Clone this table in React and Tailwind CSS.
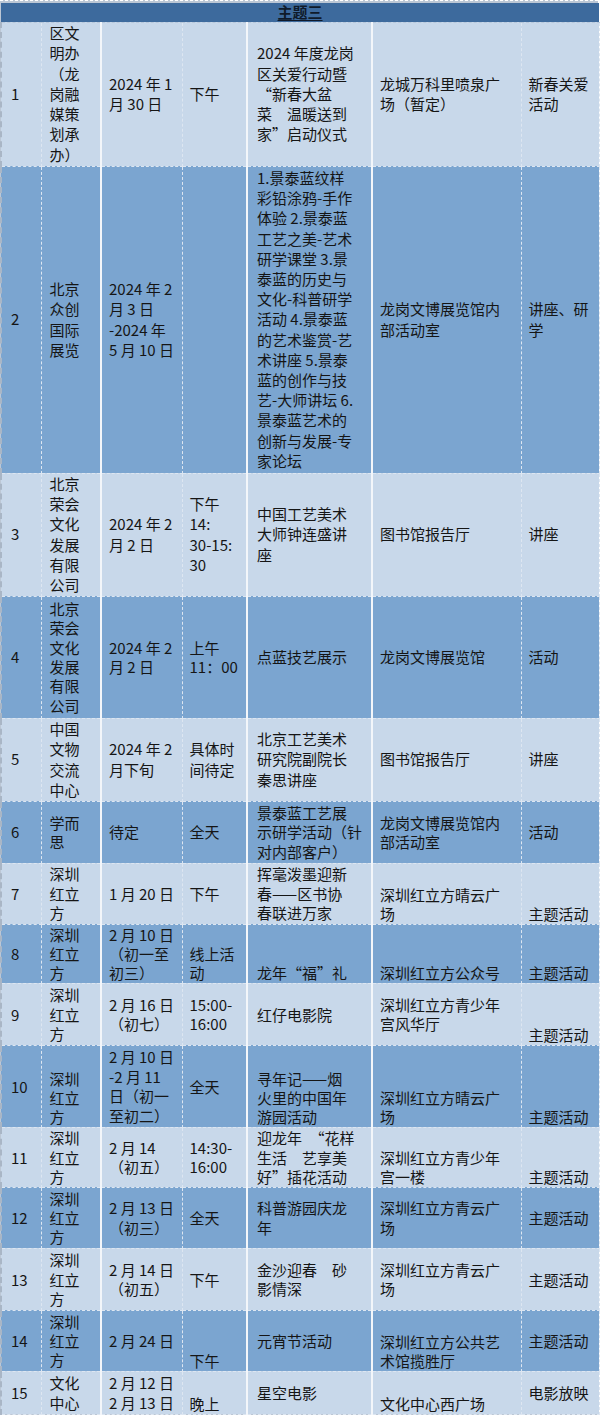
import React from "react";

// column setup: width, left padding, whether the left rule is a solid white line
const COLS = [
  { w: "w-[40px]", pad: "pl-[9px]", solid: false },
  { w: "w-[60px]", pad: "pl-[8px]", solid: false },
  { w: "w-[81px]", pad: "pl-[7px]", solid: true },
  { w: "w-[65px]", pad: "pl-[7px]", solid: false },
  { w: "w-[125px]", pad: "pl-[9px]", solid: true },
  { w: "w-[149px]", pad: "pl-[7px]", solid: true },
  { w: "w-[78px]", pad: "pl-[7px]", solid: false },
];

const SZ = "深圳\n红立\n方";

// v: vertical alignment per column (m = middle, b = bottom)
const ROWS = [
  {
    h: "h-[144px]",
    v: "mmmmmmm",
    cells: [
      "1",
      "区文\n明办\n（龙\n岗融\n媒策\n划承\n办）",
      "2024 年 1\n月 30 日",
      "下午",
      "2024 年度龙岗\n区关爱行动暨\n“新春大盆\n菜　温暖送到\n家”启动仪式",
      "龙城万科里喷泉广\n场（暂定）",
      "新春关爱\n活动",
    ],
  },
  {
    h: "h-[307px]",
    v: "mmmmmmm",
    cells: [
      "2",
      "北京\n众创\n国际\n展览",
      "2024 年 2\n月 3 日\n-2024 年\n5 月 10 日",
      "",
      "1.景泰蓝纹样\n彩铅涂鸦-手作\n体验 2.景泰蓝\n工艺之美-艺术\n研学课堂 3.景\n泰蓝的历史与\n文化-科普研学\n活动 4.景泰蓝\n的艺术鉴赏-艺\n术讲座 5.景泰\n蓝的创作与技\n艺-大师讲坛 6.\n景泰蓝艺术的\n创新与发展-专\n家论坛",
      "龙岗文博展览馆内\n部活动室",
      "讲座、研\n学",
    ],
  },
  {
    h: "h-[123px]",
    v: "mmmmmmm",
    cells: [
      "3",
      "北京\n荣会\n文化\n发展\n有限\n公司",
      "2024 年 2\n月 2 日",
      "下午\n14:\n30-15:\n30",
      "中国工艺美术\n大师钟连盛讲\n座",
      "图书馆报告厅",
      "讲座",
    ],
  },
  {
    h: "h-[122px]",
    v: "mmmmmmm",
    tight: true,
    cells: [
      "4",
      "北京\n荣会\n文化\n发展\n有限\n公司",
      "2024 年 2\n月 2 日",
      "上午\n11：00",
      "点蓝技艺展示",
      "龙岗文博展览馆",
      "活动",
    ],
  },
  {
    h: "h-[83px]",
    v: "mmmmmmm",
    cells: [
      "5",
      "中国\n文物\n交流\n中心",
      "2024 年 2\n月下旬",
      "具体时\n间待定",
      "北京工艺美术\n研究院副院长\n秦思讲座",
      "图书馆报告厅",
      "讲座",
    ],
  },
  {
    h: "h-[62px]",
    v: "mmmmmmm",
    tight: true,
    cells: [
      "6",
      "学而\n思",
      "待定",
      "全天",
      "景泰蓝工艺展\n示研学活动（针\n对内部客户）",
      "龙岗文博展览馆内\n部活动室",
      "活动",
    ],
  },
  {
    h: "h-[61px]",
    v: "mmmmmbb",
    tight: true,
    cells: [
      "7",
      SZ,
      "1 月 20 日",
      "下午",
      "挥毫泼墨迎新\n春——区书协\n春联进万家",
      "深圳红立方晴云广\n场",
      "主题活动",
    ],
  },
  {
    h: "h-[59px]",
    v: "mmmbbbb",
    tight: true,
    cells: [
      "8",
      SZ,
      "2 月 10 日\n（初一至\n初三）",
      "线上活\n动",
      "龙年“福”礼",
      "深圳红立方公众号",
      "主题活动",
    ],
  },
  {
    h: "h-[62px]",
    v: "mmmmmmb",
    tight: true,
    cells: [
      "9",
      SZ,
      "2 月 16 日\n（初七）",
      "15:00-\n16:00",
      "红仔电影院",
      "深圳红立方青少年\n宫风华厅",
      "主题活动",
    ],
  },
  {
    h: "h-[82px]",
    v: "mbmmbbb",
    tight: true,
    cells: [
      "10",
      SZ,
      "2 月 10 日\n-2 月 11\n日（初一\n至初二）",
      "全天",
      "寻年记——烟\n火里的中国年\n游园活动",
      "深圳红立方晴云广\n场",
      "主题活动",
    ],
  },
  {
    h: "h-[60px]",
    v: "mmmmmbb",
    tight: true,
    cells: [
      "11",
      SZ,
      "2 月 14\n（初五）",
      "14:30-\n16:00",
      "迎龙年　“花样\n生活　艺享美\n好”插花活动",
      "深圳红立方青少年\n宫一楼",
      "主题活动",
    ],
  },
  {
    h: "h-[61px]",
    v: "mmmmmmm",
    tight: true,
    cells: [
      "12",
      SZ,
      "2 月 13 日\n（初三）",
      "全天",
      "科普游园庆龙\n年",
      "深圳红立方青云广\n场",
      "主题活动",
    ],
  },
  {
    h: "h-[62px]",
    v: "mmmmmmm",
    tight: true,
    cells: [
      "13",
      SZ,
      "2 月 14 日\n（初五）",
      "下午",
      "金沙迎春　砂\n影情深",
      "深圳红立方青云广\n场",
      "主题活动",
    ],
  },
  {
    h: "h-[61px]",
    v: "mmmbmbm",
    tight: true,
    cells: [
      "14",
      SZ,
      "2 月 24 日",
      "下午",
      "元宵节活动",
      "深圳红立方公共艺\n术馆揽胜厅",
      "主题活动",
    ],
  },
  {
    h: "h-[43px]",
    v: "mmmbmbm",
    tight: true,
    cells: [
      "15",
      "文化\n中心",
      "2 月 12 日\n2 月 13 日",
      "晚上",
      "星空电影",
      "文化中心西广场",
      "电影放映",
    ],
  },
];

const Cell = ({ text, col, v, tight }) => {
  const c = COLS[col];
  return (
    <td
      className={`p-0 ${c.pad} pr-[2px] border border-dashed border-[#dde6f1] ${
        v === "b" ? "align-bottom" : "align-middle"
      } ${tight ? "leading-[19.4px]" : "leading-[20.2px]"} ${
        c.solid ? "border-l-2 border-l-[#f3f6fa] [border-left-style:solid]" : ""
      } ${col === 0 ? "border-l-2 border-l-[#a9b6c6]" : ""}`}
    >
      {text.split("\n").map((line, i) => (
        <div key={i} className="whitespace-nowrap">
          {line || "\u00a0"}
        </div>
      ))}
    </td>
  );
};

export default function App() {
  return (
    <div className="w-[600px] bg-white font-['Noto_Sans_CJK_SC','Noto_Sans',sans-serif] text-[15px] text-[#151515]">
      <div className="w-[598px] bg-[#bcc7d5] pt-[2px] border-t border-dashed border-t-white">
        <table className="w-[598px] table-fixed border-collapse">
          <colgroup>
            {COLS.map((c, i) => (
              <col key={i} className={c.w} />
            ))}
          </colgroup>
          <thead>
            <tr className="h-[19px] bg-[#3d6a9d]">
              <th
                colSpan={7}
                className="p-0 text-center align-middle leading-[18px] font-bold underline underline-offset-2 text-[#0f1a2a] border-b border-dashed border-b-[#b8c8db]"
              >
                主题三
              </th>
            </tr>
          </thead>
          <tbody>
            {ROWS.map((row, r) => (
              <tr
                key={r}
                className={`${row.h} ${r % 2 === 0 ? "bg-[#c8d8ea]" : "bg-[#7ba5d0]"}`}
              >
                {row.cells.map((text, col) => (
                  <Cell key={col} text={text} col={col} v={row.v[col]} tight={row.tight} />
                ))}
              </tr>
            ))}
          </tbody>
        </table>
      </div>
    </div>
  );
}
